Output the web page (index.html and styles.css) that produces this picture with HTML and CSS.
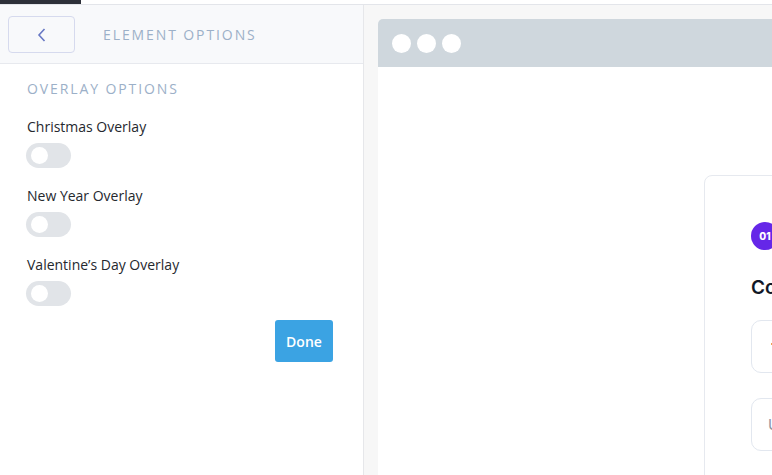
FILE: index.html
```html
<!DOCTYPE html>
<html lang="en">
<head>
  <meta charset="UTF-8">
  <title>Element Options</title>
  <link rel="stylesheet" href="styles.css">
</head>
<body>

  <div class="topbar"><div class="topbar-tab"></div></div>

  <div class="layout">
    <aside class="panel">
      <div class="panel-head">
        <button class="back-btn" type="button">
          <svg width="10" height="14" viewBox="0 0 10 14"><path d="M7.5 1 L2 7 L7.5 13" fill="none" stroke="#6878c4" stroke-width="1.6"/></svg>
        </button>
        <span class="panel-title">Element Options</span>
      </div>

      <div class="panel-body">
        <h2 class="section-title">Overlay Options</h2>

        <div class="option">
          <label>Christmas Overlay</label>
          <span class="toggle"><span class="knob"></span></span>
        </div>
        <div class="option">
          <label>New Year Overlay</label>
          <span class="toggle"><span class="knob"></span></span>
        </div>
        <div class="option">
          <label>Valentine’s Day Overlay</label>
          <span class="toggle"><span class="knob"></span></span>
        </div>

        <div class="actions">
          <button class="done-btn" type="button">Done</button>
        </div>
      </div>
    </aside>

    <main class="stage">
      <div class="browser">
        <div class="browser-bar">
          <span class="dot"></span><span class="dot"></span><span class="dot"></span>
        </div>
        <div class="browser-body">
          <div class="card">
            <span class="step">01</span>
            <h3 class="card-title">Contact information</h3>
            <div class="field"><span class="flag"></span></div>
            <div class="field"><span class="placeholder">Username</span></div>
          </div>
        </div>
      </div>
    </main>
  </div>

</body>
</html>
```

FILE: styles.css
```css
html, body {
  margin: 0;
  height: 100%;
  overflow: hidden;
}

body {
  font-family: 'Open Sans', 'Noto Sans', sans-serif;
  background-color: #ffffff;
  color: #25282e;
}

.topbar {
  height: 4px;
  border-bottom: 1px solid #e3e5ea;
}

.topbar-tab {
  width: 81px;
  height: 4px;
  background-color: #2d3039;
}

.layout {
  display: flex;
  height: calc(100% - 5px);
}

/* left panel */
.panel {
  width: 363px;
  flex-shrink: 0;
  border-right: 1px solid #e6e7ea;
  background-color: #fff;
}

.panel-head {
  height: 58px;
  display: flex;
  align-items: center;
  padding: 0 8px;
  background-color: #f8f9fb;
  border-bottom: 1px solid #e7e9ee;
}

.back-btn {
  width: 67px;
  height: 37px;
  display: flex;
  align-items: center;
  justify-content: center;
  background-color: #f8f9fb;
  border: 1px solid #d6daee;
  border-radius: 4px;
  padding: 0;
  margin-right: 28px;
  margin-top: 1px;
}

.panel-title {
  font-size: 14px;
  letter-spacing: 1.9px;
  text-transform: uppercase;
  color: #9cb0c8;
}

.panel-body {
  padding: 15px 30px 0 27px;
}

.section-title {
  margin: 0 0 18px;
  font-size: 14px;
  line-height: 20px;
  font-weight: normal;
  letter-spacing: 1.9px;
  text-transform: uppercase;
  color: #9cb0c8;
}

.option {
  display: flex;
  flex-direction: column;
  align-items: flex-start;
  gap: 6px;
  margin-bottom: 18px;
}

.option label {
  font-size: 14px;
  line-height: 20px;
  color: #25282e;
}

.toggle {
  width: 45px;
  height: 25px;
  margin-left: -1px;
  border-radius: 13px;
  background-color: #e1e4e8;
  display: flex;
  align-items: center;
  padding-left: 5px;
  box-sizing: border-box;
}

.knob {
  width: 17px;
  height: 17px;
  border-radius: 50%;
  background-color: #fff;
}

.actions {
  display: flex;
  justify-content: flex-end;
  margin-top: -4px;
}

.done-btn {
  width: 58px;
  height: 42px;
  padding: 0;
  border: none;
  border-radius: 3px;
  background-color: #3ba3e3;
  color: #fff;
  font-family: inherit;
  font-size: 14px;
  font-weight: 600;
}

/* preview area */
.stage {
  flex: 1;
  background-color: #f7f7f7;
  padding: 14px 0 0 14px;
  overflow: hidden;
}

.browser {
  height: 100%;
  display: flex;
  flex-direction: column;
}

.browser-bar {
  height: 48px;
  flex-shrink: 0;
  display: flex;
  align-items: center;
  gap: 6px;
  padding-left: 14px;
  background-color: #cfd7dd;
  border-radius: 5px 0 0 0;
}

.dot {
  width: 19px;
  height: 19px;
  border-radius: 50%;
  background-color: #fff;
}

.browser-body {
  flex: 1;
  background-color: #fff;
  padding: 108px 0 0 326px;
}

.card {
  width: 420px;
  height: 400px;
  box-sizing: border-box;
  border: 1px solid #e6e9ef;
  border-radius: 8px;
  padding: 46px 0 0 46px;
  font-family: 'Inter', 'DejaVu Sans', sans-serif;
}

.step {
  display: flex;
  align-items: center;
  justify-content: center;
  width: 28px;
  height: 28px;
  border-radius: 50%;
  background-color: #6527e8;
  color: #fff;
  font-size: 10px;
  font-weight: 800;
}

.card-title {
  margin: 26px 0 20px;
  font-size: 19px;
  line-height: 24px;
  font-weight: 600;
  color: #111827;
}

.field {
  height: 53px;
  width: 330px;
  box-sizing: border-box;
  border: 1px solid #e2e7ef;
  border-radius: 10px;
  margin-bottom: 25px;
  display: flex;
  align-items: center;
  padding-left: 16px;
}

.flag {
  width: 4px;
  height: 2px;
  background-color: #f0a050;
  margin-left: 3px;
  margin-top: -5px;
}

.placeholder {
  font-size: 15px;
  color: #8f949c;
}
```
